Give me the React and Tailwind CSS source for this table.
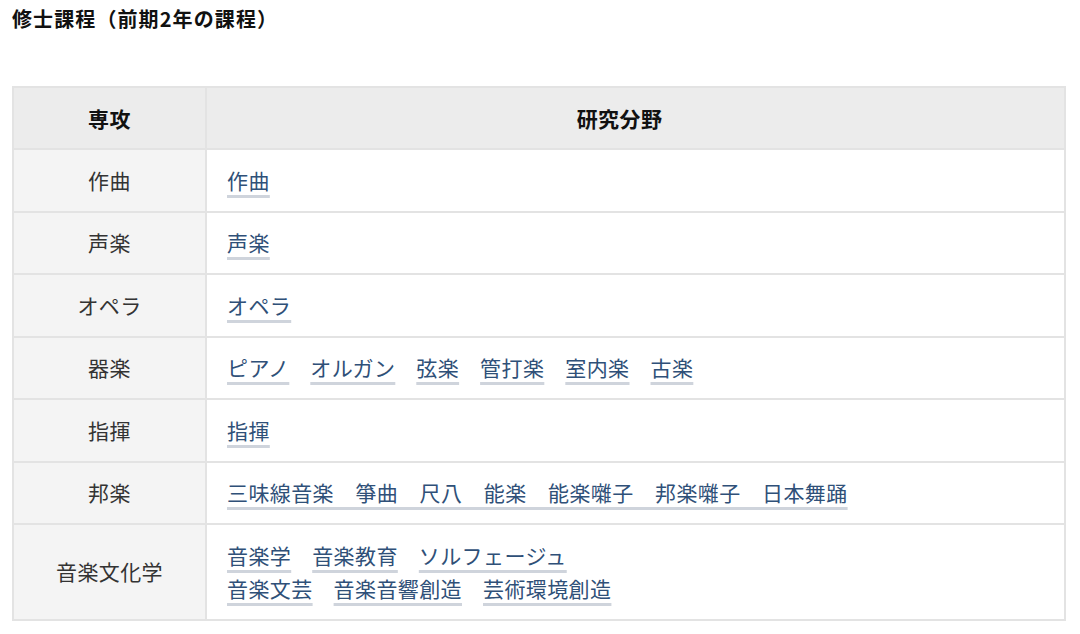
const rows = [
  { major: "作曲", fields: [["作曲"]] },
  { major: "声楽", fields: [["声楽"]] },
  { major: "オペラ", fields: [["オペラ"]] },
  { major: "器楽", fields: [["ピアノ", "オルガン", "弦楽", "管打楽", "室内楽", "古楽"]] },
  { major: "指揮", fields: [["指揮"]] },
  {
    major: "邦楽",
    fields: [["三味線音楽　箏曲　尺八　能楽　能楽囃子　邦楽囃子　日本舞踊"]],
  },
  {
    major: "音楽文化学",
    fields: [
      ["音楽学", "音楽教育", "ソルフェージュ"],
      ["音楽文芸", "音楽音響創造", "芸術環境創造"],
    ],
  },
];

const FieldLink = ({ children }) => (
  <a
    href="#"
    className="mr-[21px] text-[#2f5078] underline decoration-[#cfd4dc] decoration-[3px] underline-offset-[6px] last:mr-0"
  >
    {children}
  </a>
);

export default function App() {
  return (
    <div
      className="min-h-screen bg-white px-3 pt-[4px] text-[#333333]"
      style={{ fontFamily: '"Noto Sans CJK JP", "Noto Sans", sans-serif' }}
    >
      <h2 className="text-[20px] font-bold leading-[30px] tracking-[1.1px] text-[#111111]">
        修士課程（前期2年の課程）
      </h2>

      <table className="mt-[52px] w-[1054px] border-collapse border-2 border-[#e3e3e3] text-[21px] tracking-[0.4px]">
        <thead>
          <tr className="bg-[#ececec]">
            <th className="w-[193px] border-2 border-[#e3e3e3] py-[15px] text-center leading-[30px] font-bold text-[#111111]">
              専攻
            </th>
            <th className="border-2 border-[#e3e3e3] py-[15px] pr-8 text-center leading-[30px] font-bold text-[#111111]">
              研究分野
            </th>
          </tr>
        </thead>
        <tbody>
          {rows.map((row) => (
            <tr key={row.major}>
              <td className="border-2 border-[#e3e3e3] bg-[#f4f4f4] py-[13.75px] text-center leading-[33px]">
                {row.major}
              </td>
              <td className="border-2 border-[#e3e3e3] bg-white px-[20px] py-[13.75px] leading-[33px]">
                {row.fields.map((line, i) => (
                  <div key={i}>
                    {line.map((f) => (
                      <FieldLink key={f}>{f}</FieldLink>
                    ))}
                  </div>
                ))}
              </td>
            </tr>
          ))}
        </tbody>
      </table>
    </div>
  );
}
